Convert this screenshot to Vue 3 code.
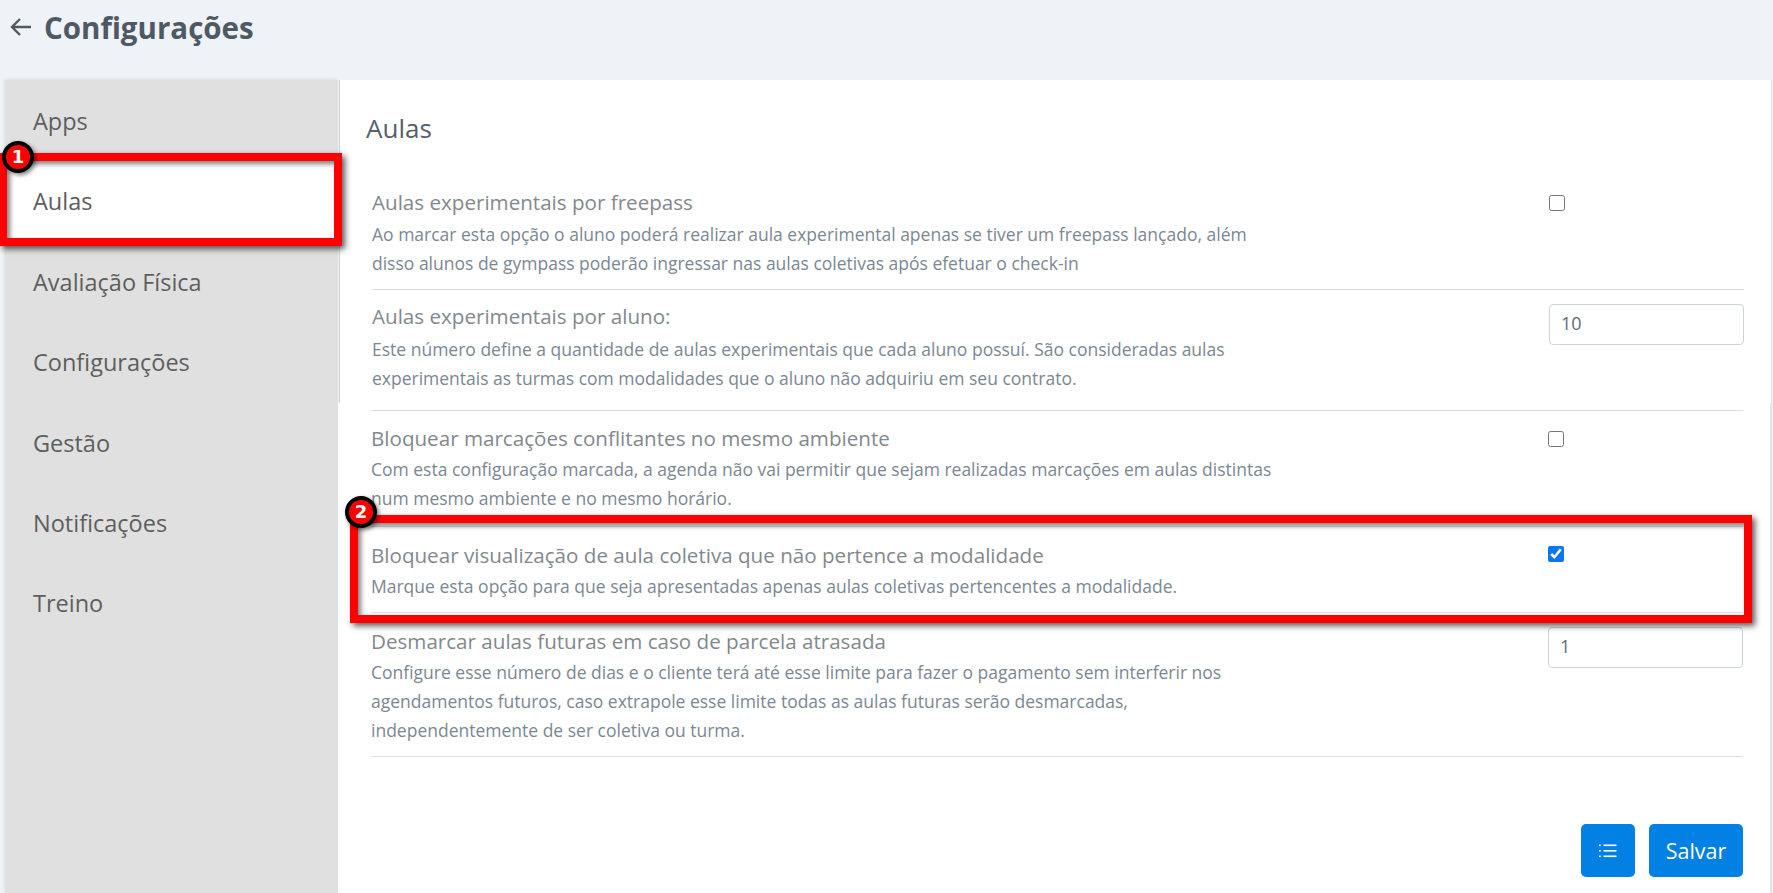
<script setup>
const menu = ['Apps', 'Aulas', 'Avaliação Física', 'Configurações', 'Gestão', 'Notificações', 'Treino']
const upper = [
  { id: 'r1', title: 'Aulas experimentais por freepass', lines: ['Ao marcar esta opção o aluno poderá realizar aula experimental apenas se tiver um freepass lançado, além', 'disso alunos de gympass poderão ingressar nas aulas coletivas após efetuar o check-in'], type: 'check' },
  { id: 'r2', title: 'Aulas experimentais por aluno:', lines: ['Este número define a quantidade de aulas experimentais que cada aluno possuí. São consideradas aulas', 'experimentais as turmas com modalidades que o aluno não adquiriu em seu contrato.'], type: 'num', value: '10' }
]
const lower = [
  { id: 'r3', title: 'Bloquear marcações conflitantes no mesmo ambiente', lines: ['Com esta configuração marcada, a agenda não vai permitir que sejam realizadas marcações em aulas distintas', 'num mesmo ambiente e no mesmo horário.'], type: 'check' },
  { id: 'r4', title: 'Bloquear visualização de aula coletiva que não pertence a modalidade', lines: ['Marque esta opção para que seja apresentadas apenas aulas coletivas pertencentes a modalidade.'], type: 'check', checked: true },
  { id: 'r5', title: 'Desmarcar aulas futuras em caso de parcela atrasada', lines: ['Configure esse número de dias e o cliente terá até esse limite para fazer o pagamento sem interferir nos', 'agendamentos futuros, caso extrapole esse limite todas as aulas futuras serão desmarcadas,', 'independentemente de ser coletiva ou turma.'], type: 'num', value: '1' }
]
</script>

<template>
  <div class="page">
    <header class="top">
      <svg class="back" width="22" height="20" viewBox="0 0 22 20" fill="none" stroke="#4f5963" stroke-width="2.4">
        <path d="M21 10H2M10 2l-8 8 8 8" />
      </svg>
      <h1>Configurações</h1>
    </header>
    <div class="main">
      <nav class="side">
        <div v-for="m in menu" :key="m" class="item" :class="{ active: m === 'Aulas' }">{{ m }}</div>
      </nav>
      <div class="panel">
        <section class="upper">
          <h2>Aulas</h2>
          <div v-for="r in upper" :key="r.id" class="row" :class="r.id">
            <div class="text">
              <div class="title">{{ r.title }}</div>
              <div v-for="l in r.lines" :key="l" class="desc">{{ l }}</div>
            </div>
            <input v-if="r.type === 'check'" class="check" type="checkbox" :checked="r.checked" />
            <input v-else class="num" type="text" :value="r.value" />
          </div>
        </section>
        <section class="lower">
          <div v-for="r in lower" :key="r.id" class="row" :class="r.id">
            <div class="text">
              <div class="title">{{ r.title }}</div>
              <div v-for="l in r.lines" :key="l" class="desc">{{ l }}</div>
            </div>
            <input v-if="r.type === 'check'" class="check" type="checkbox" :checked="r.checked" />
            <input v-else class="num" type="text" :value="r.value" />
          </div>
          <div class="actions">
            <button class="btn icon" aria-label="Lista">
              <svg width="18" height="14" viewBox="0 0 18 14" fill="#fff">
                <rect x="4.5" y="0.5" width="13" height="1.6" />
                <rect x="4.5" y="6" width="13" height="1.6" />
                <rect x="4.5" y="11.5" width="13" height="1.6" />
                <rect x="0" y="0.5" width="1.7" height="1.6" />
                <rect x="0" y="6" width="1.7" height="1.6" />
                <rect x="0" y="11.5" width="1.7" height="1.6" />
              </svg>
            </button>
            <button class="btn save">Salvar</button>
          </div>
        </section>
      </div>
    </div>
    <div class="mark m1"></div>
    <div class="badge b1">1</div>
    <div class="mark m2"></div>
    <div class="badge b2">2</div>
  </div>
</template>

<style>
html, body { margin: 0; background: #eff3f8; }
</style>

<style scoped>
.page {
  position: relative;
  height: 893px;
  overflow: hidden;
  background: #eff3f8;
  font-family: "Open Sans", Lato, sans-serif;
}
.top {
  height: 80px;
  box-sizing: border-box;
  display: flex;
  align-items: flex-start;
  padding: 8px 0 0 10px;
}
.back { margin: 9px 12px 0 0; }
h1 {
  margin: 0;
  font-size: 29.5px;
  line-height: 40px;
  font-weight: 700;
  color: #4f5963;
}
.main { display: flex; height: 813px; }
.side {
  width: 333px;
  margin-left: 5px;
  padding-top: 1px;
  background: #e0e0e0;
  box-shadow: -1px -1px 3px rgba(0, 0, 0, .08);
}
.item {
  height: 80.4px;
  line-height: 80.4px;
  padding-left: 28px;
  font-size: 23.5px;
  font-weight: 500;
  color: #5e5e5e;
}
.item.active { background: #fff; width: 340px; margin-left: -5px; padding-left: 33px; box-sizing: border-box; }
.panel { width: 1432px; }
.upper {
  height: 323px;
  box-sizing: border-box;
  margin: 0 -1px 0 1px;
  padding: 0 27px 0 32px;
  background: #fff;
  border-left: 1px solid #cfd2d6;
  box-shadow: 1px 0 0 #e2e5ea;
  overflow: hidden;
}
h2 {
  margin: 0;
  height: 95px;
  box-sizing: border-box;
  padding: 32px 0 0 0;
  margin-left: -6px;
  font-size: 26px;
  line-height: 32px;
  font-weight: 400;
  color: #55606b;
}
.lower {
  height: 490px;
  box-sizing: border-box;
  padding: 7px 27px 0 33px;
  background: #fff;
  box-shadow: 2px 0 0 #e2e5ea;
}
.row {
  display: flex;
  justify-content: space-between;
  align-items: flex-start;
  box-sizing: border-box;
  border-bottom: 1px solid #dcdee1;
}
.text { padding-top: 14px; }
.title {
  font-size: 20.6px;
  line-height: 29px;
  margin-bottom: 2px;
  font-weight: 500;
  color: #82888e;
  white-space: nowrap;
}
.desc {
  font-size: 17.5px;
  line-height: 29px;
  color: #7b8793;
  white-space: nowrap;
}
.r1 { height: 115px; }
.r2 { height: 121px; }
.r3 { height: 117px; border-top: 1px solid #dcdee1; }
.r4 { height: 86px; }
.r5 { height: 144px; }
.r1 .text { padding-top: 13px; }
.r1 .title { margin-bottom: 3px; }
.r2 .text { padding-top: 12px; }
.r2 .title { margin-bottom: 4px; }
.r3 .text { padding-top: 13px; }
.check {
  appearance: auto;
  width: 16px;
  height: 16px;
  margin: 20px 179px 0 0;
  accent-color: #0b76ef;
}
.r4 .check { margin-top: 19px; }
.num {
  width: 195px;
  height: 41px;
  box-sizing: border-box;
  margin-top: 14px;
  padding: 0 0 3px 11px;
  border: 1px solid #ced4da;
  border-radius: 4px;
  font: inherit;
  font-size: 18px;
  color: #5f6b76;
  background: #fff;
}
.actions {
  display: flex;
  justify-content: flex-end;
  gap: 14px;
  margin-top: 67px;
}
.btn {
  height: 53px;
  border: 0;
  border-radius: 5px;
  background: #0380e3;
  color: #fff;
  font: inherit;
  font-size: 21.5px;
  display: flex;
  align-items: center;
  justify-content: center;
  padding: 0;
}
.icon { width: 54px; }
.save { width: 94px; }
.mark {
  position: absolute;
  box-sizing: border-box;
  border: 8px solid #ff0000;
  box-shadow: 3px 3px 6px rgba(0, 0, 0, .65), inset 3px 3px 5px rgba(0, 0, 0, .5);
}
.m1 { left: -1px; top: 153px; width: 343px; height: 93px; }
.m2 { left: 350px; top: 515px; width: 1402px; height: 108px; }
.badge {
  position: absolute;
  width: 24px;
  height: 24px;
  box-sizing: content-box;
  border: 4px solid #000;
  border-radius: 50%;
  background: #f00;
  color: #fff;
  font: 700 18px/24px "DejaVu Sans", sans-serif;
  text-align: center;
  box-shadow: 2px 2px 4px rgba(0, 0, 0, .5);
}
.b1 { left: 2px; top: 141px; }
.b2 { left: 345px; top: 496px; }
</style>
